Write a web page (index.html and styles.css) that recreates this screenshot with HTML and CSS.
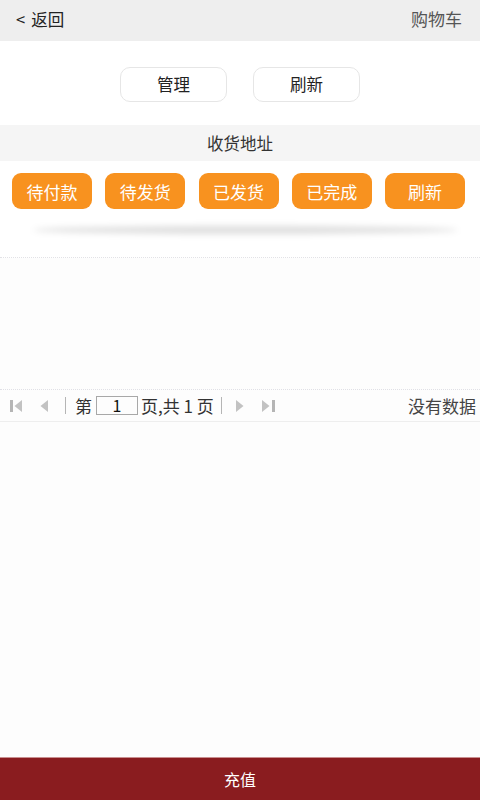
FILE: index.html
```html
<!DOCTYPE html>
<html lang="zh">
<head>
<meta charset="utf-8">
<link rel="stylesheet" href="styles.css">
</head>
<body>
<div class="page">
  <header class="topbar">
    <span class="back"><span class="lt">&lt;</span>返回</span>
    <span class="cart">购物车</span>
  </header>
  <section class="actions">
    <button class="btn-outline">管理</button>
    <button class="btn-outline">刷新</button>
  </section>
  <div class="address">收货地址</div>
  <section class="status-row">
    <button class="btn-orange">待付款</button>
    <button class="btn-orange">待发货</button>
    <button class="btn-orange">已发货</button>
    <button class="btn-orange">已完成</button>
    <button class="btn-orange">刷新</button>
  </section>
  <div class="shadow-wrap"><div class="shadow"></div></div>
  <div class="list-area"></div>
  <div class="pager">
    <div class="pager-left">
      <svg class="pg-first" width="12" height="16" viewBox="0 0 12 16"><rect x="0" y="2" width="3" height="12" fill="#b5b5b5"/><path d="M12 2 L4.5 8 L12 14 Z" fill="#c2c2c2"/></svg>
      <svg class="pg-prev" width="8" height="16" viewBox="0 0 8 16"><path d="M8 2 L0.5 8 L8 14 Z" fill="#c2c2c2"/></svg>
      <span class="sep sep-a"></span>
      <span class="pg-text">第</span>
      <span class="pg-input">1</span>
      <span class="pg-text">页,共 1 页</span>
      <span class="sep sep-b"></span>
      <svg class="pg-next" width="8" height="16" viewBox="0 0 8 16"><path d="M0 2 L7.5 8 L0 14 Z" fill="#c2c2c2"/></svg>
      <svg class="pg-last" width="14" height="16" viewBox="0 0 14 16"><path d="M0 2 L7.5 8 L0 14 Z" fill="#c2c2c2"/><rect x="10" y="2" width="3" height="12" fill="#b5b5b5"/></svg>
    </div>
    <span class="nodata">没有数据</span>
  </div>
  <div class="filler"></div>
  <footer class="bottombar">充值</footer>
</div>
</body>
</html>
```
FILE: styles.css
```css
* { box-sizing: border-box; }
html, body { margin: 0; padding: 0; }
body {
  font-family: "Noto Sans CJK SC", "Noto Sans", "Liberation Sans", sans-serif;
  background: #fdfdfd;
  color: #333;
}
.page {
  display: flex;
  flex-direction: column;
  height: 800px;
}
.topbar {
  height: 41px;
  background: #eeeeee;
  display: flex;
  align-items: center;
  justify-content: space-between;
  padding: 0 18px 4px 16px;
  font-size: 16px;
}
.back { color: #222; font-size: 16.5px; display: flex; align-items: center; }
.lt { margin-right: 6px; }
.cart { color: #555; font-size: 17px; }
.actions {
  background: #fff;
  height: 84px;
  display: flex;
  justify-content: center;
  align-items: center;
  gap: 26px;
  padding-top: 2px;
}
.btn-outline {
  width: 107px;
  height: 35px;
  border: 1px solid #e6e6e6;
  border-radius: 10px;
  background: #fff;
  font-family: inherit;
  font-size: 16.5px;
  color: #222;
  padding: 0;
}
.address {
  height: 36px;
  background: #f5f5f5;
  display: flex;
  align-items: center;
  justify-content: center;
  font-size: 16.5px;
  color: #333;
}
.status-row {
  background: #fff;
  display: flex;
  justify-content: space-between;
  padding: 12px 15px 0 12px;
}
.btn-orange {
  width: 80px;
  height: 36px;
  border: none;
  border-radius: 9px;
  background: #f8921f;
  color: #fff;
  font-family: inherit;
  font-size: 17px;
  padding: 0;
}
.shadow-wrap {
  background: #fff;
  height: 49px;
  padding: 17px 22px 0 33px;
  border-bottom: 1px dotted #e2e2e6;
}
.shadow {
  height: 8px;
  border-radius: 50%;
  background: rgba(0,0,0,0.13);
  filter: blur(3px);
}
.list-area {
  height: 131px;
}
.pager {
  height: 33px;
  border-top: 1px dotted #e0e0e6;
  border-bottom: 1px solid #eeeeee;
  display: flex;
  align-items: center;
  justify-content: space-between;
  padding: 0 4px 0 10px;
  font-size: 17px;
  color: #333;
}
.pager-left {
  display: flex;
  align-items: center;
}
.pager-left svg { display: block; }
.pg-first { margin-right: 18px; }
.pg-prev { margin-right: 17px; }
.sep {
  width: 1px;
  height: 17px;
  background: #b5b5b5;
}
.sep-a { margin-right: 9px; }
.sep-b { margin-left: 7px; margin-right: 14px; }
.pg-next { margin-right: 18px; }
.pg-input {
  width: 42px;
  height: 19px;
  border: 1px solid #a8a8a8;
  margin: 0 3px 0 4px;
  text-align: center;
  line-height: 17px;
  font-size: 16px;
  color: #111;
}
.nodata { color: #444; font-size: 17px; }
.filler { flex: 1; }
.bottombar {
  height: 43px;
  background: #8a1c1f;
  color: #fff;
  display: flex;
  align-items: center;
  justify-content: center;
  font-size: 16px;
  border-top: 1px solid #c98f90;
}
```
